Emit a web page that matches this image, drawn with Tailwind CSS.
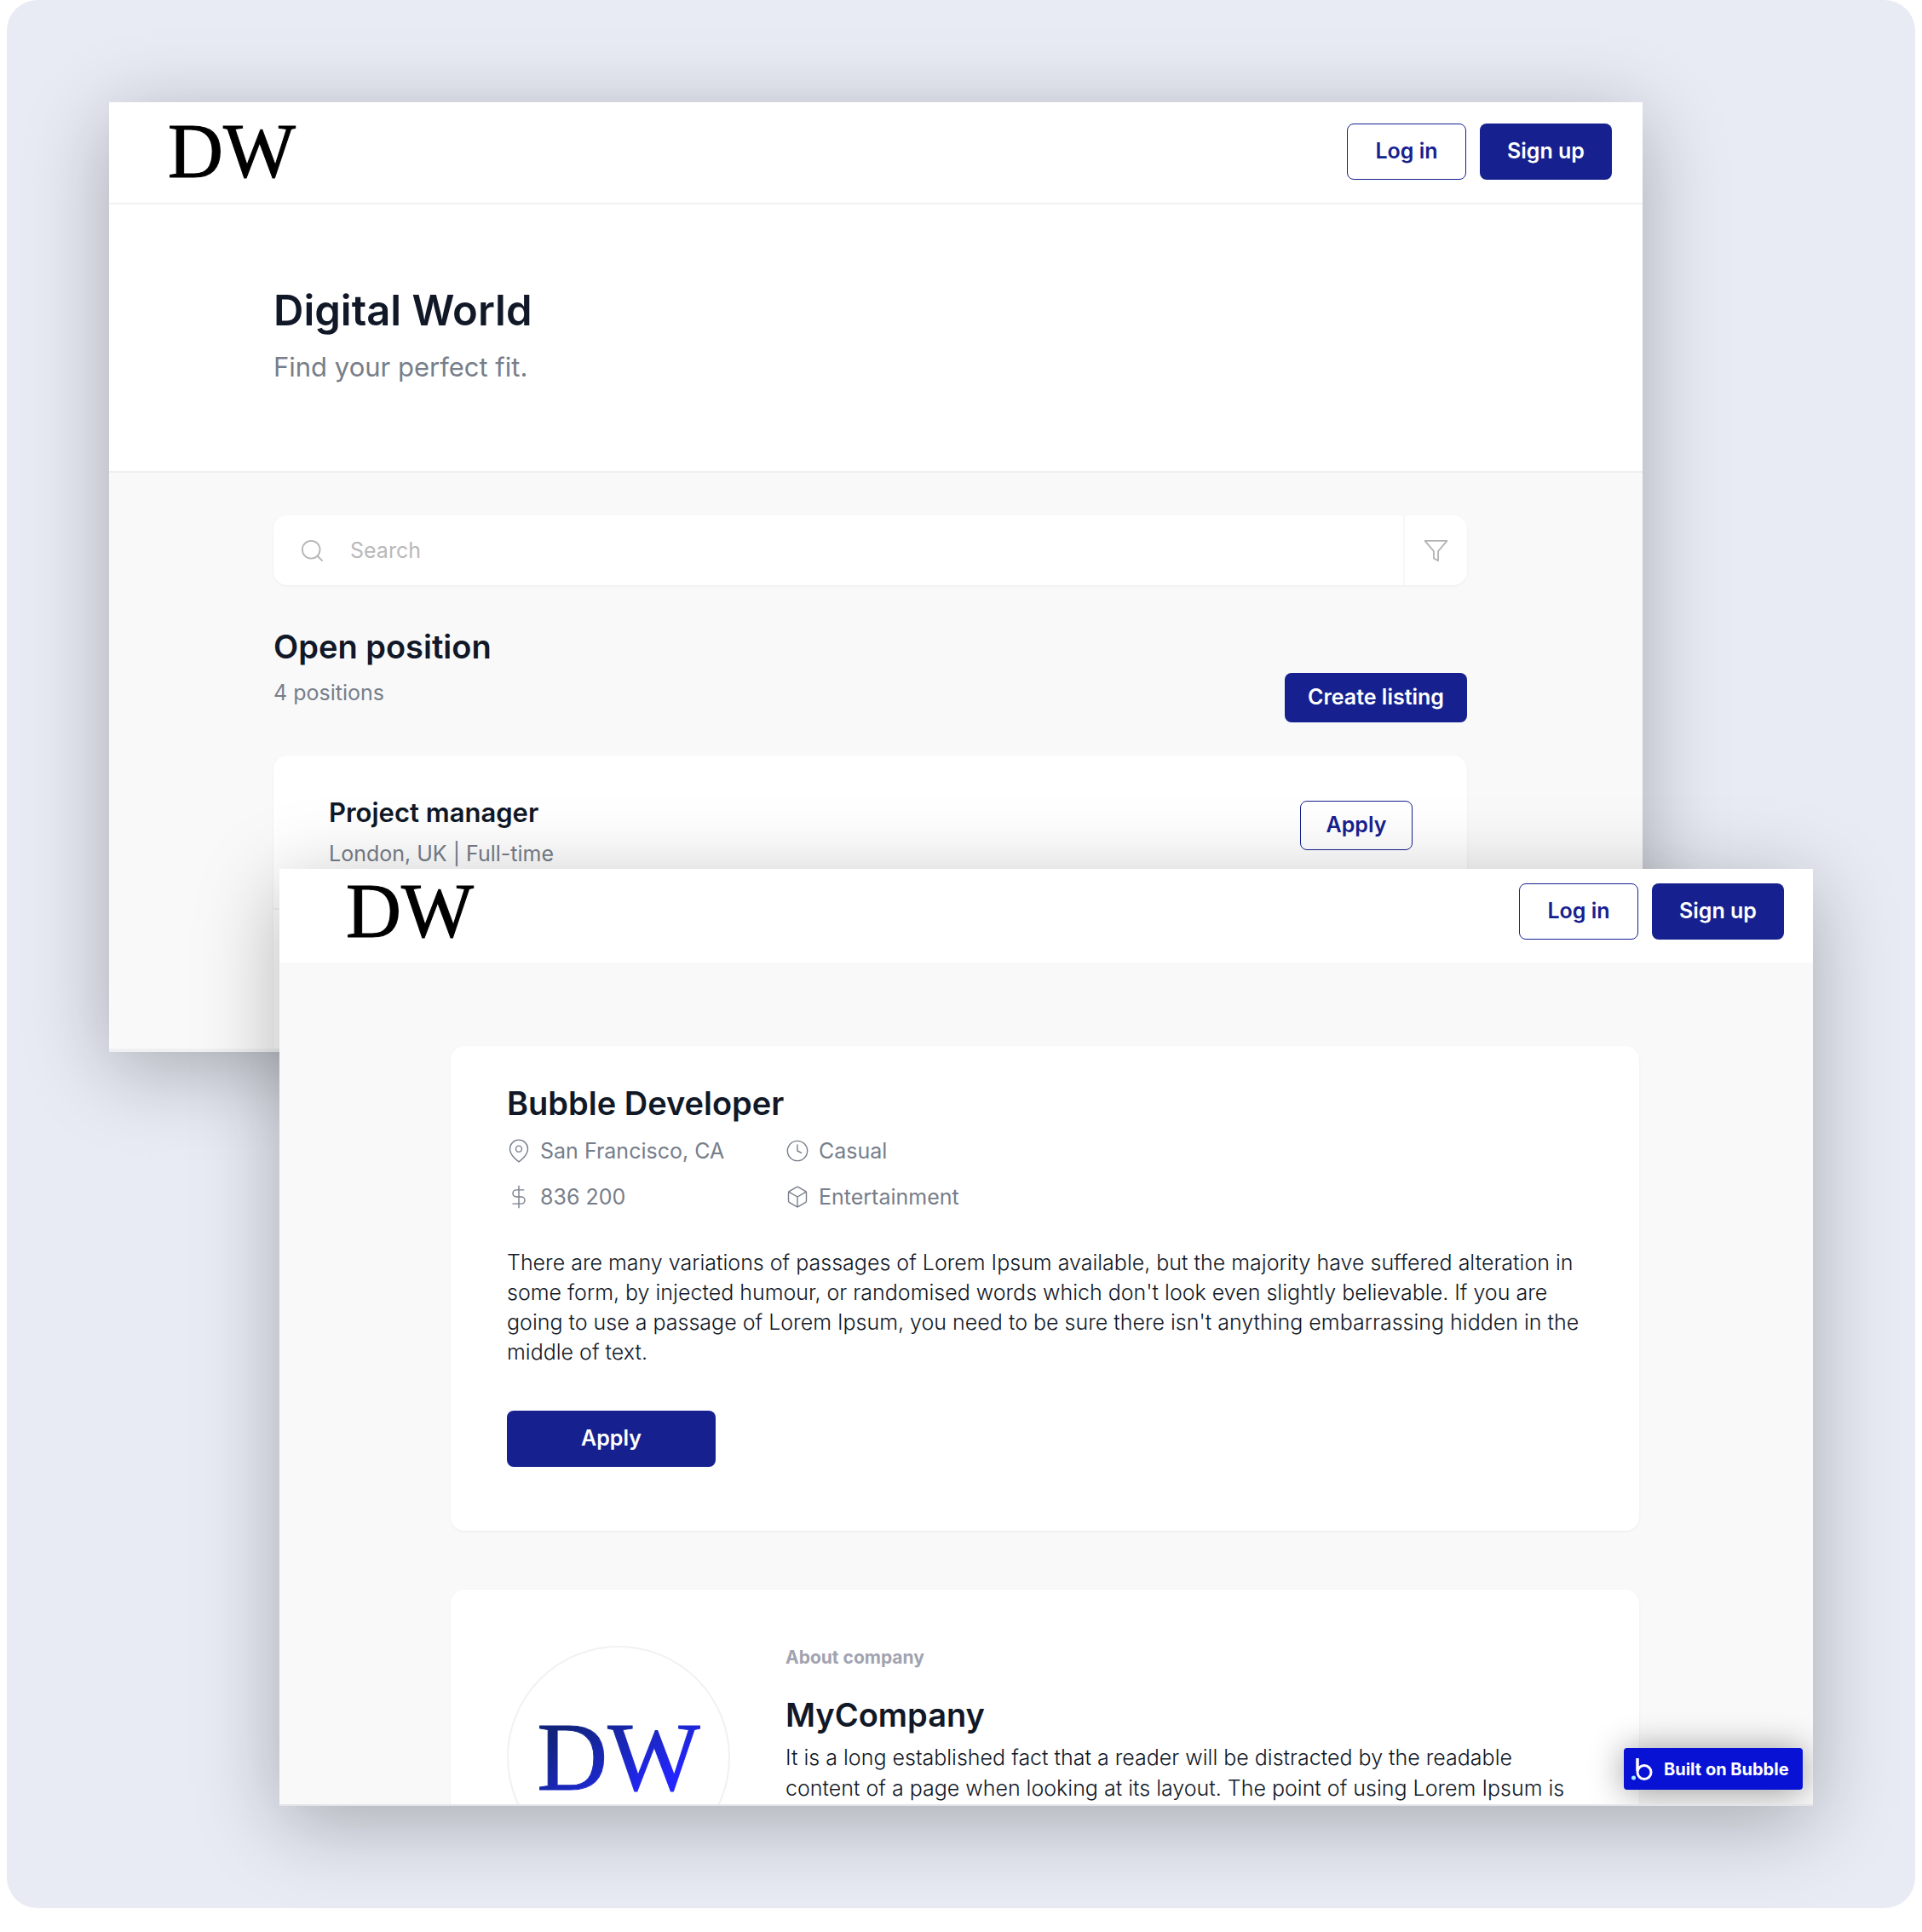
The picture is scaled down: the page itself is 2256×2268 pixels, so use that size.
<!DOCTYPE html>
<html lang="en">
<head>
<meta charset="utf-8">
<meta name="viewport" content="width=device-width, initial-scale=1">
<title>Digital World</title>
<script src="https://cdn.jsdelivr.net/npm/@tailwindcss/browser@4"></script>
</head>
<body class="bg-white pb-7 font-['Inter',sans-serif] text-[#111827]">
<div class="mx-2 rounded-[36px] bg-[#e8ebf4] flow-root">

  <!-- Listings window -->
  <section class="ml-[120px] mr-[320px] mt-[120px] h-[1115px] overflow-hidden border-b-4 border-[#eff0f2] bg-[#f9f9f9] shadow-[0_20px_92px_rgba(0,0,0,0.28)]">
    <header class="flex h-[120px] items-center justify-between border-b-2 border-[#f1f1f1] bg-white pb-0.5 pl-[69px] pr-9">
      <a href="#" class="font-['Liberation_Serif',serif] text-[90px] leading-[104px] text-black [-webkit-text-stroke:1px_black]">DW</a>
      <nav class="flex gap-4">
        <button class="h-[66px] w-[140px] rounded-lg border border-[#16218f] bg-white text-[25px] font-semibold text-[#16218f]">Log in</button>
        <button class="h-[66px] w-[155px] rounded-lg bg-[#16218f] text-[25px] font-semibold text-white">Sign up</button>
      </nav>
    </header>

    <div class="h-[315px] border-b-2 border-[#efefef] bg-white pl-[193px] pt-[95px]">
      <h1 class="text-[49px] font-semibold leading-[60px]">Digital World</h1>
      <p class="mt-4 text-[31px] leading-10 text-[#777e8a]">Find your perfect fit.</p>
    </div>

    <main class="pl-[193px] pr-[206px] pt-[50px]">
      <form class="flex h-[82px] items-center rounded-2xl bg-white shadow-[0_1px_3px_rgba(0,0,0,0.06)]">
        <label for="search" class="flex w-[90px] items-center justify-center">
          <svg class="size-[31px]" role="img" aria-label="Search positions" viewBox="0 0 24 24" fill="none" stroke="#b4b4b4" stroke-width="1.4" stroke-linecap="round" stroke-linejoin="round"><circle cx="11" cy="11" r="8"/><path d="m21 21-4.35-4.35"/></svg>
        </label>
        <input id="search" type="text" placeholder="Search" class="h-10 min-w-0 flex-1 bg-transparent text-[25px] leading-10 outline-none placeholder:text-[#b9b9b9]">
        <button type="button" aria-label="Filter" class="flex w-[75px] items-center justify-center self-stretch border-l-2 border-[#f6f6f6]">
          <svg class="size-[31px]" viewBox="0 0 24 24" fill="none" stroke="#b4b4b4" stroke-width="1.4" stroke-linecap="round" stroke-linejoin="round"><path d="M22 3H2l8 9.46V19l4 2v-8.54L22 3z"/></svg>
        </button>
      </form>

      <div class="mt-12 flex items-start justify-between">
        <div>
          <h2 class="text-[38px] font-semibold leading-[48px]">Open position</h2>
          <p class="mt-3 text-[25px] leading-9 text-[#777e8a]">4 positions</p>
        </div>
        <button class="mt-[55px] h-[58px] w-[214px] rounded-lg bg-[#16218f] text-[25px] font-semibold text-white">Create listing</button>
      </div>

      <ul class="mt-[39px] divide-y-2 divide-[#f4f4f4] rounded-2xl bg-white shadow-[0_1px_3px_rgba(0,0,0,0.06)]">
        <li class="flex h-[181px] items-start justify-between pl-[65px] pr-16 pt-[47px]">
          <div>
            <h3 class="text-[31px] font-semibold leading-10">Project manager</h3>
            <p class="mt-2.5 text-[25px] leading-9 text-[#777e8a]">London, UK | Full-time</p>
          </div>
          <button class="mt-1.5 h-[58px] w-[132px] rounded-lg border border-[#16218f] bg-transparent text-[25px] font-semibold text-[#16218f]">Apply</button>
        </li>
        <li class="h-[181px]"></li>
      </ul>
    </main>
  </section>

  <!-- Position detail window, overlapping the listings window -->
  <section class="relative mb-[120px] ml-[320px] mr-[120px] mt-[-215px] h-[1100px] overflow-hidden border-b-2 border-[#e3e4e8] bg-[#f9f9f9] shadow-[0_20px_92px_rgba(0,0,0,0.28)]">
    <header class="flex h-[110px] items-center justify-between bg-white pb-2.5 pl-[78px] pr-[34px]">
      <a href="#" class="font-['Liberation_Serif',serif] text-[90px] leading-[100px] text-black [-webkit-text-stroke:1px_black]">DW</a>
      <nav class="flex gap-4">
        <button class="h-[66px] w-[140px] rounded-lg border border-[#16218f] bg-white text-[25px] font-semibold text-[#16218f]">Log in</button>
        <button class="h-[66px] w-[155px] rounded-lg bg-[#16218f] text-[25px] font-semibold text-white">Sign up</button>
      </nav>
    </header>

    <main class="pl-[201px] pr-[204px] pt-[98px]">
      <article class="rounded-2xl bg-white pb-[75px] pl-[66px] pr-[65px] pt-[43px] shadow-[0_1px_3px_rgba(0,0,0,0.06)]">
        <h1 class="text-[38px] font-semibold leading-[48px]">Bubble Developer</h1>
        <ul class="mt-3.5 grid grid-cols-[327px_1fr] gap-y-[18px] text-[25px] leading-9 text-[#777e8a]">
          <li class="flex items-center gap-[11px]">
            <svg class="size-7" viewBox="0 0 24 24" fill="none" stroke="currentColor" stroke-width="1.2" stroke-linecap="round" stroke-linejoin="round"><path d="M21 10c0 7-9 13-9 13s-9-6-9-13a9 9 0 0 1 18 0z"/><circle cx="12" cy="10" r="3"/></svg>
            San Francisco, CA
          </li>
          <li class="flex items-center gap-[11px]">
            <svg class="size-7" viewBox="0 0 24 24" fill="none" stroke="currentColor" stroke-width="1.2" stroke-linecap="round" stroke-linejoin="round"><circle cx="12" cy="12" r="10"/><path d="M12 6v6l4 2"/></svg>
            Casual
          </li>
          <li class="flex items-center gap-[11px]">
            <svg class="size-7" viewBox="0 0 24 24" fill="none" stroke="currentColor" stroke-width="1.2" stroke-linecap="round" stroke-linejoin="round"><path d="M12 1v22M17 5H9.500a3.500 3.500 0 0 0 0 7h5a3.500 3.500 0 0 1 0 7H6"/></svg>
            836 200
          </li>
          <li class="flex items-center gap-[11px]">
            <svg class="size-7" viewBox="0 0 24 24" fill="none" stroke="currentColor" stroke-width="1.2" stroke-linecap="round" stroke-linejoin="round"><path d="M21 16V8a2 2 0 0 0-1-1.730l-7-4a2 2 0 0 0-2 0l-7 4A2 2 0 0 0 3 8v8a2 2 0 0 0 1 1.730l7 4a2 2 0 0 0 2 0l7-4A2 2 0 0 0 21 16z"/><path d="M3.270 6.960 12 12.010l8.730-5.050M12 22.080V12"/></svg>
            Entertainment
          </li>
        </ul>
        <p class="mt-[42px] text-[25px] font-light leading-[35px]">There are many variations of passages of Lorem Ipsum available, but the majority have suffered alteration in some form, by injected humour, or randomised words which don't look even slightly believable. If you are going to use a passage of Lorem Ipsum, you need to be sure there isn't anything embarrassing hidden in the middle of text.</p>
        <button class="mt-[51px] h-[66px] w-[245px] rounded-lg bg-[#16218f] text-[25px] font-semibold text-white">Apply</button>
      </article>

      <article class="mt-[69px] flex items-start gap-[65px] rounded-2xl bg-white pb-[75px] pl-[66px] pr-[65px] pt-[66px] shadow-[0_1px_3px_rgba(0,0,0,0.06)]">
        <div class="flex size-[262px] shrink-0 items-center justify-center rounded-full border-2 border-[#f0f1f2]">
          <span class="bg-linear-to-br from-[#12237c] from-20% to-[#2424ff] to-75% bg-clip-text font-['Liberation_Serif',serif] text-[115px] leading-[132px] text-transparent [-webkit-text-stroke:1px_transparent]">DW</span>
        </div>
        <div>
          <p class="text-[21px] font-bold leading-7 text-[#a1a3b0]">About company</p>
          <h2 class="mt-[29px] text-[38px] font-semibold leading-[48px]">MyCompany</h2>
          <p class="mt-2 text-[25px] font-light leading-9">It is a long established fact that a reader will be distracted by the readable content of a page when looking at its layout. The point of using Lorem Ipsum is</p>
        </div>
      </article>
    </main>

    <!-- Builder badge -->
    <a href="#" class="absolute bottom-[17px] right-3 flex h-[49px] w-[210px] items-center gap-3 rounded bg-[#0812d4] pl-2 text-[20px] font-bold text-white shadow-[0_2px_40px_rgba(0,0,0,0.4)]">
      <svg class="size-[27px]" viewBox="0 0 27 27" fill="none"><path d="M8 1v15" stroke="#fff" stroke-width="3.500"/><circle cx="16" cy="17.500" r="8" stroke="#fff" stroke-width="3"/><circle cx="3.500" cy="24" r="2.500" fill="#a8f0ff"/></svg>
      Built on Bubble
    </a>
  </section>
</div>
</body>
</html>
